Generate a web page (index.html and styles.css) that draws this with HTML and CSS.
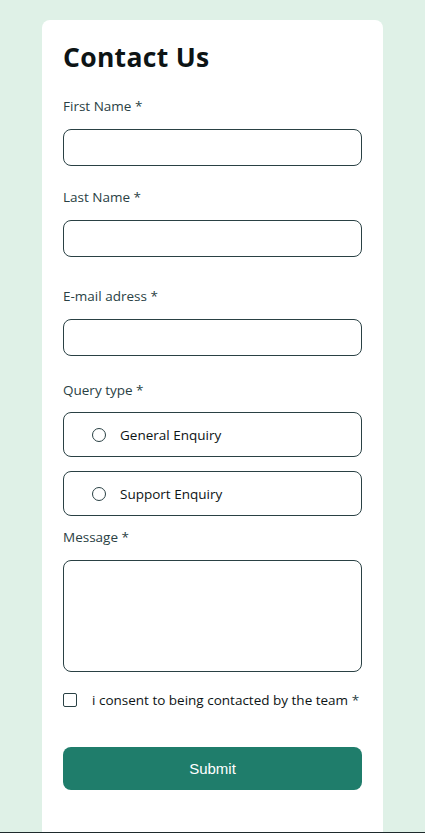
FILE: index.html
```html
<!DOCTYPE html>
<html lang="en">
<head>
<meta charset="utf-8">
<title>Contact Us</title>
<link rel="stylesheet" href="styles.css">
</head>
<body>
<main class="page">
  <form class="card">
    <h1 class="title">Contact Us</h1>
    <div class="field field-first">
      <label class="label">First Name <span class="req">*</span></label>
      <div class="input"></div>
    </div>
    <div class="field field-last">
      <label class="label">Last Name <span class="req">*</span></label>
      <div class="input"></div>
    </div>
    <div class="field field-email">
      <label class="label">E-mail adress <span class="req">*</span></label>
      <div class="input"></div>
    </div>
    <div class="field field-query">
      <span class="label">Query type <span class="req">*</span></span>
      <div class="option"><span class="radio"></span><span class="option-text">General Enquiry</span></div>
      <div class="option option-second"><span class="radio"></span><span class="option-text">Support Enquiry</span></div>
    </div>
    <div class="field field-message">
      <label class="label">Message <span class="req">*</span></label>
      <div class="textarea"></div>
    </div>
    <div class="consent">
      <span class="checkbox"></span>
      <span class="consent-text">i consent to being contacted by the team <span class="req">*</span></span>
    </div>
    <button type="button" class="submit">Submit</button>
  </form>
</main>
<footer class="footer"></footer>
</body>
</html>
```

FILE: styles.css
```css
* { box-sizing: border-box; }
html, body { margin: 0; padding: 0; }
body {
  background: #dff1e7;
  font-family: "Open Sans", "Liberation Sans", sans-serif;
  color: #2a4144;
}
.page {
  padding: 20px 42px 0;
}
.card {
  background: #fff;
  border-radius: 8px 8px 0 0;
  height: 812px;
  padding: 17px 21px 0;
  display: flex;
  flex-direction: column;
}
.title {
  margin: 0;
  font-size: 26.5px;
  line-height: 40px;
  font-weight: 700;
  color: #0d1415;
  letter-spacing: 0.3px;
}
.field { display: flex; flex-direction: column; }
.label {
  font-size: 13.5px;
  line-height: 20px;
  color: #2a4144;
}
.req { color: #2a4144; }
.field-first { margin-top: 19px; }
.field-last { margin-top: 21px; }
.field-email { margin-top: 29px; }
.field-query { margin-top: 24px; }
.field-message { margin-top: 11px; }
.input {
  margin-top: 13px;
  height: 37px;
  border: 1px solid #2a4144;
  border-radius: 8px;
}
.option {
  margin-top: 12px;
  height: 45px;
  border: 1px solid #2a4144;
  border-radius: 8px;
  display: flex;
  align-items: center;
  padding-left: 28px;
}
.option-second { margin-top: 14px; }
.radio {
  width: 14px;
  height: 14px;
  border: 1px solid #2a4144;
  border-radius: 50%;
  flex: none;
}
.option-text {
  margin-left: 14px;
  font-size: 13.5px;
  color: #0d1415;
}
.textarea {
  margin-top: 13px;
  height: 112px;
  border: 1px solid #2a4144;
  border-radius: 8px;
}
.consent {
  margin-top: 20px;
  display: flex;
  align-items: center;
  height: 16px;
}
.checkbox {
  width: 14px;
  height: 14px;
  border: 1px solid #2a4144;
  border-radius: 2px;
  flex: none;
}
.consent-text {
  margin-left: 15px;
  font-size: 13.5px;
  color: #0d1415;
  white-space: nowrap;
}
.submit {
  margin-top: 39px;
  height: 43px;
  border: none;
  border-radius: 8px;
  background: #1f7d6b;
  color: #fff;
  font-family: "Liberation Sans", Arial, sans-serif;
  font-size: 15px;
  width: 100%;
}
.footer {
  height: 40px;
  background: #1e2a2c;
}
```
